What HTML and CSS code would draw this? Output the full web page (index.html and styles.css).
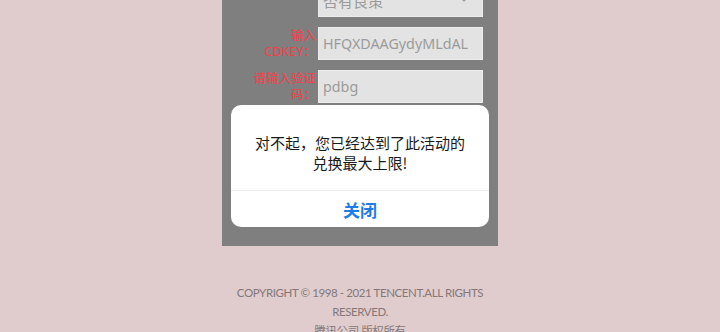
FILE: index.html
```html
<!DOCTYPE html>
<html lang="zh-CN">
<head>
<meta charset="utf-8">
<title>CDKEY兑换</title>
<link rel="stylesheet" href="styles.css">
</head>
<body>
<div class="page">
  <div class="panel">
    <div class="row">
      <div class="label"></div>
      <div class="field select">
        <span class="value">否有良策</span>
        <svg class="chev" width="10" height="6" viewBox="0 0 10 6"><path d="M1 1l4 4 4-4" fill="none" stroke="#9a9a9a" stroke-width="1.2"/></svg>
      </div>
    </div>
    <div class="row">
      <div class="label">输入<br>CDKEY：</div>
      <div class="field"><span class="value">HFQXDAAGydyMLdAL</span></div>
    </div>
    <div class="row">
      <div class="label">请输入验证<br>码：</div>
      <div class="field"><span class="value">pdbg</span></div>
    </div>
    <div class="spacer"></div>
  </div>
  <div class="footer">
    <p>COPYRIGHT © 1998 - 2021 TENCENT.ALL RIGHTS RESERVED.</p>
    <p>腾讯公司 版权所有</p>
  </div>
</div>
<div class="modal">
  <div class="modal-text">对不起，您已经达到了此活动的<br>兑换最大上限!</div>
  <div class="modal-btn">关闭</div>
</div>
</body>
</html>
```
FILE: styles.css
```css
html, body {
  margin: 0;
  padding: 0;
}
body {
  background: #e0cccd;
  font-family: "Lato", "Noto Sans CJK SC", sans-serif;
  overflow: hidden;
  height: 332px;
}
.page {
  width: 276px;
  margin: 0 auto;
}
.panel {
  background: #7f7f7f;
  margin-top: -16px;
  padding: 0 15px 0 28px;
  display: flex;
  flex-direction: column;
  gap: 10px;
}
.row {
  display: flex;
  align-items: center;
  gap: 2px;
  height: 33px;
}
.label {
  flex: 0 0 66px;
  width: 66px;
  text-align: right;
  color: #e8474f;
  font-size: 12.5px;
  line-height: 16px;
  font-weight: 500;
  font-family: "Noto Sans", "Noto Sans CJK SC", sans-serif;
  white-space: nowrap;
}
.field {
  flex: 1 1 0;
  min-width: 0;
  overflow: hidden;
  height: 33px;
  box-sizing: border-box;
  background: #e3e3e3;
  border: 1px solid #ececec;
  display: flex;
  align-items: center;
  padding-left: 4px;
  color: #9b9b9b;
  font-size: 14.3px;
  font-family: "Noto Sans", "Noto Sans CJK SC", sans-serif;
  position: relative;
  white-space: nowrap;
}
.select .value {
  font-family: "Noto Sans CJK SC", sans-serif;
  font-size: 15px;
}
.chev {
  position: absolute;
  right: 13px;
  top: 11px;
}
.spacer {
  height: 133px;
}
.footer {
  padding-top: 37px;
  text-align: center;
  color: #857879;
  font-size: 11.5px;
  letter-spacing: -0.4px;
  line-height: 19px;
  font-family: "Lato", "Noto Sans CJK SC", sans-serif;
}
.footer p {
  margin: 0;
  padding: 0 12px;
}
.modal {
  position: fixed;
  left: 231px;
  top: 105px;
  width: 258px;
  height: 122px;
  background: #fff;
  border-radius: 10px;
  display: flex;
  flex-direction: column;
  font-family: "Noto Sans CJK SC", sans-serif;
}
.modal-text {
  padding: 28px 10px 17px;
  text-align: center;
  font-size: 15px;
  line-height: 20px;
  color: #1a1a1a;
  border-bottom: 1px solid #eeeeee;
}
.modal-btn {
  flex: 1;
  display: flex;
  align-items: center;
  justify-content: center;
  color: #1d7de8;
  font-size: 17px;
  font-weight: bold;
}
```
